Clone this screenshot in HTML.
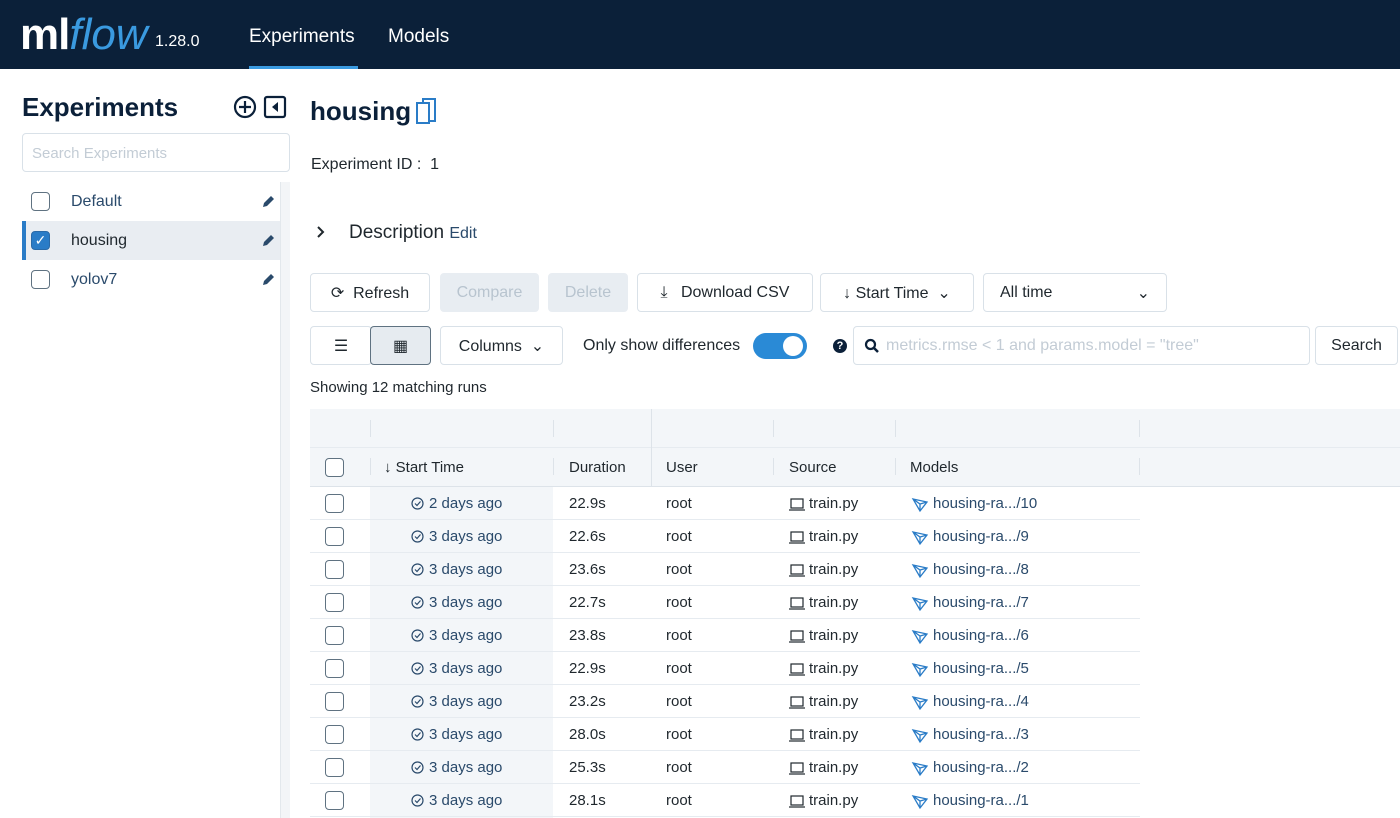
<!DOCTYPE html>
<html><head><style>
*{box-sizing:border-box;margin:0;padding:0}
body{width:1400px;height:818px;overflow:hidden;background:#fff;font-family:"Liberation Sans",sans-serif;color:#1f272d;position:relative}
.abs{position:absolute}
.nav{left:0;top:0;width:1400px;height:69px;background:#0b2039}
.btn{position:absolute;height:39px;border:1px solid #d9e1e8;border-radius:4px;background:#fff;font-size:16px;display:flex;align-items:center;justify-content:center;color:#1f272d}
.dis{background:#e8edf2;border-color:#e8edf2;color:#b8c4cf}
.cb{position:absolute;width:19px;height:19px;border:1.5px solid #5f7281;border-radius:4px;background:#fff}
.t{position:absolute;font-size:15px;white-space:nowrap}
.sep{position:absolute;top:420px;width:1px;height:17px;background:#dde3e9}
.sep2{position:absolute;top:458px;width:1px;height:17px;background:#dde3e9}
</style></head><body>
<div class="abs nav"></div>
<div class="t" style="left:20px;top:10px;font-size:44px;font-weight:bold;color:#fff;letter-spacing:-1px">ml<span style="color:#3a9ae0;font-style:italic;font-weight:normal;letter-spacing:0">flow</span></div>
<div class="t" style="left:155px;top:33px;font-size:16px;color:#fff">1.28.0</div>
<div class="t" style="left:249px;top:26px;font-size:19px;color:#fff">Experiments</div>
<div class="abs" style="left:249px;top:66px;width:109px;height:3px;background:#3a9ae0"></div>
<div class="t" style="left:388px;top:26px;font-size:19px;color:#fff">Models</div>

<div class="t" style="left:22px;top:92px;font-size:26px;font-weight:bold;color:#0b2039">Experiments</div>
<svg class="abs" style="left:233px;top:95px" width="56" height="24"><circle cx="12" cy="12" r="10" fill="none" stroke="#0b2039" stroke-width="2.2"/><path d="M12 6v12M6 12h12" stroke="#0b2039" stroke-width="2.2"/><rect x="32" y="2" width="20" height="20" rx="2" fill="none" stroke="#0b2039" stroke-width="2.2"/><path d="M45 7v10l-6-5z" fill="#0b2039"/></svg>
<div class="abs" style="left:22px;top:133px;width:268px;height:39px;border:1px solid #d9e1e8;border-radius:4px"></div>
<div class="t" style="left:32px;top:145px;color:#c3ccd5">Search Experiments</div>
<div class="abs" style="left:280px;top:182px;width:10px;height:636px;background:#f3f5f7;border-left:1px solid #e3e8ec"></div>
<div class="abs" style="left:22px;top:221px;width:258px;height:39px;background:#e9edf2;border-left:4px solid #2a7cc7"></div>
<div class="cb" style="left:31px;top:192px"></div>
<div class="t" style="left:71px;top:193px;color:#2a4a6b;font-size:16px">Default</div>
<div class="cb" style="left:31px;top:231px;background:#2a7cc7;border-color:#2a6aa8;color:#fff;font-size:14px;line-height:16px;text-align:center">✓</div>
<div class="t" style="left:71px;top:232px;color:#1f272d;font-size:16px">housing</div>
<div class="cb" style="left:31px;top:270px"></div>
<div class="t" style="left:71px;top:271px;color:#2a4a6b;font-size:16px">yolov7</div>
<svg class="abs" style="left:262px;top:195px" width="13" height="13"><path d="M1 12l1-4 7-7 3 3-7 7z" fill="#2a4a6b"/></svg>
<svg class="abs" style="left:262px;top:234px" width="13" height="13"><path d="M1 12l1-4 7-7 3 3-7 7z" fill="#2a4a6b"/></svg>
<svg class="abs" style="left:262px;top:273px" width="13" height="13"><path d="M1 12l1-4 7-7 3 3-7 7z" fill="#2a4a6b"/></svg>

<div class="t" style="left:310px;top:96px;font-size:26px;font-weight:bold;color:#0b2039">housing</div>
<svg class="abs" style="left:414px;top:97px" width="24" height="28"><rect x="9" y="2" width="12" height="22" fill="none" stroke="#2a7cc7" stroke-width="2"/><rect x="3" y="6" width="12" height="20" fill="#fff" stroke="#2a7cc7" stroke-width="2"/></svg>
<div class="t" style="left:311px;top:156px;font-size:16px">Experiment ID :&nbsp; 1</div>
<svg class="abs" style="left:316px;top:225px" width="10" height="14"><path d="M2 2l5 5-5 5" fill="none" stroke="#1f272d" stroke-width="2"/></svg>
<div class="t" style="left:349px;top:222px;font-size:19px">Description <span style="font-size:16px;color:#2a4a6b">Edit</span></div>

<div class="btn" style="left:310px;top:273px;width:120px">⟳&nbsp;&nbsp;Refresh</div>
<div class="btn dis" style="left:440px;top:273px;width:99px">Compare</div>
<div class="btn dis" style="left:548px;top:273px;width:80px">Delete</div>
<div class="btn" style="left:637px;top:273px;width:176px">⤓&nbsp;&nbsp;&nbsp;Download CSV</div>
<div class="btn" style="left:820px;top:273px;width:154px">↓ Start Time&nbsp; ⌄</div>
<div class="btn" style="left:983px;top:273px;width:184px;justify-content:space-between;padding:0 16px">All time<span>⌄</span></div>

<div class="btn" style="left:310px;top:326px;width:62px">☰</div>
<div class="btn" style="left:370px;top:326px;width:61px;background:#e6ebf0;border-color:#5f7281">▦</div>
<div class="btn" style="left:440px;top:326px;width:123px">Columns&nbsp; ⌄</div>
<div class="t" style="left:583px;top:337px;font-size:16px">Only show differences</div>
<div class="abs" style="left:753px;top:333px;width:54px;height:26px;border-radius:13px;background:#2a8ad6"></div>
<div class="abs" style="left:783px;top:336px;width:20px;height:20px;border-radius:10px;background:#fff"></div>
<div class="abs" style="left:833px;top:339px;width:14px;height:14px;border-radius:7px;background:#0b2039;color:#fff;font-size:11px;font-weight:bold;text-align:center;line-height:14px">?</div>
<div class="btn" style="left:853px;top:326px;width:457px;justify-content:flex-start;padding-left:10px;color:#c3ccd5"><svg width="16" height="16" style="margin-right:6px"><circle cx="6.5" cy="6.5" r="4.5" fill="none" stroke="#0b2039" stroke-width="2.2"/><path d="M10 10l4 4" stroke="#0b2039" stroke-width="2.5"/></svg>metrics.rmse &lt; 1 and params.model = "tree"</div>
<div class="btn" style="left:1315px;top:326px;width:83px">Search</div>
<div class="t" style="left:310px;top:379px">Showing 12 matching runs</div>

<div class="abs" style="left:310px;top:409px;width:1090px;height:78px;background:#f3f6f9;border-bottom:1px solid #dde3e9"></div>
<div class="abs" style="left:310px;top:447px;width:1090px;height:1px;background:#e6ebf0"></div>
<div class="abs" style="left:370px;top:487px;width:183px;height:331px;background:#f3f6f9"></div>
<div class="abs" style="left:651px;top:409px;width:1px;height:78px;background:#dde3e9"></div>
<div class="sep" style="left:370px"></div><div class="sep" style="left:553px"></div><div class="sep" style="left:773px"></div><div class="sep" style="left:895px"></div><div class="sep" style="left:1139px"></div>
<div class="sep2" style="left:370px"></div><div class="sep2" style="left:553px"></div><div class="sep2" style="left:773px"></div><div class="sep2" style="left:895px"></div><div class="sep2" style="left:1139px"></div>
<div class="cb" style="left:325px;top:458px"></div>
<div class="t" style="left:384px;top:459px">↓ Start Time</div>
<div class="t" style="left:569px;top:459px">Duration</div>
<div class="t" style="left:666px;top:459px">User</div>
<div class="t" style="left:789px;top:459px">Source</div>
<div class="t" style="left:910px;top:459px">Models</div>
<div id="rows"></div>
<script>
var d=[["2","22.9","10"],["3","22.6","9"],["3","23.6","8"],["3","22.7","7"],["3","23.8","6"],["3","22.9","5"],["3","23.2","4"],["3","28.0","3"],["3","25.3","2"],["3","28.1","1"]],h="";
d.forEach(function(r,i){var y=487+i*33;
h+='<div class="abs" style="left:310px;top:'+(y+32)+'px;width:830px;height:1px;background:#e6ebf0"></div>'+
'<div class="cb" style="left:325px;top:'+(y+7)+'px"></div>'+
'<svg class="abs" style="left:411px;top:'+(y+10)+'px" width="13" height="13"><circle cx="6.5" cy="6.5" r="5.5" fill="none" stroke="#2a4a6b" stroke-width="1.2"/><path d="M4 6.5l2 2 3.5-4" fill="none" stroke="#2a4a6b" stroke-width="1.2"/></svg>'+
'<div class="t" style="left:429px;top:'+(y+8)+'px;color:#2a4a6b">'+r[0]+' days ago</div>'+
'<div class="t" style="left:569px;top:'+(y+8)+'px">'+r[1]+'s</div>'+
'<div class="t" style="left:666px;top:'+(y+8)+'px">root</div>'+
'<svg class="abs" style="left:789px;top:'+(y+11)+'px" width="16" height="13"><rect x="2" y="1" width="12" height="9" fill="none" stroke="#1f272d" stroke-width="1.2"/><path d="M0 12h16" stroke="#1f272d" stroke-width="1.2"/></svg>'+
'<div class="t" style="left:809px;top:'+(y+8)+'px">train.py</div>'+
'<svg class="abs" style="left:911px;top:'+(y+10)+'px" width="18" height="16"><path d="M2 2l14 3-7 9z M2 2l7 5 7-2 M9 7v7" fill="none" stroke="#2a7cc7" stroke-width="1.3"/></svg>'+
'<div class="t" style="left:933px;top:'+(y+8)+'px;color:#2a4a6b">housing-ra.../'+r[2]+'</div>';});
document.getElementById("rows").innerHTML=h;
</script>
</body></html>
